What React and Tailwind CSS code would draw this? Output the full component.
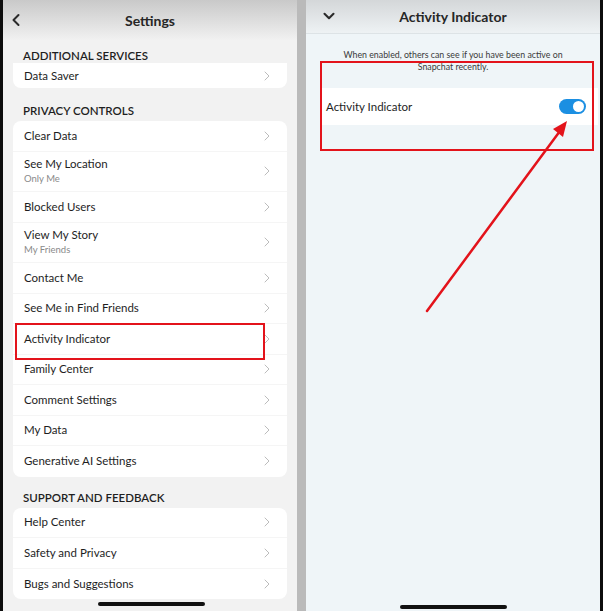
import { ChevronLeft, ChevronRight, ChevronDown } from 'lucide-react';

const FONT = { fontFamily: 'Lato, "Noto Sans", sans-serif' };

const PRIVACY = [
  { label: 'Clear Data' },
  { label: 'See My Location', sub: 'Only Me' },
  { label: 'Blocked Users' },
  { label: 'View My Story', sub: 'My Friends' },
  { label: 'Contact Me' },
  { label: 'See Me in Find Friends' },
  { label: 'Activity Indicator' },
  { label: 'Family Center' },
  { label: 'Comment Settings' },
  { label: 'My Data' },
  { label: 'Generative AI Settings' },
];

const SUPPORT = ['Help Center', 'Safety and Privacy', 'Bugs and Suggestions'];

function Chevron() {
  return <ChevronRight size={16} strokeWidth={1.5} className="text-[#bcbcbc]" />;
}

function Row({ label, sub, last }) {
  return (
    <div className={`flex items-center justify-between pl-[11px] pr-[12px] ${sub ? 'h-[40.5px]' : 'h-[30.5px]'} ${last ? '' : 'border-b border-[#f5f5f5]'}`}>
      <div className="flex flex-col">
        <span className="text-[11.5px] leading-[14px] text-[#1e1e1e]">{label}</span>
        {sub && <span className="text-[9.5px] leading-[12px] text-[#8a8a8a] mt-[2px]">{sub}</span>}
      </div>
      <Chevron />
    </div>
  );
}

function SectionLabel({ children, className }) {
  return (
    <div className={`px-[20px] text-[11.5px] leading-[14px] font-semibold text-[#1f1f1f] ${className}`}>{children}</div>
  );
}

function SettingsPanel() {
  return (
    <div className="w-[294px] h-full bg-[#f2f2f2] flex flex-col">
      <div className="h-[40px] shrink-0 bg-gradient-to-b from-[#c9c9c9] to-[#f1f1f1] relative flex items-center justify-center">
        <ChevronLeft size={20} strokeWidth={2.4} className="absolute left-[3px] top-[10px] text-[#2a2a2a]" />
        <span className="text-[14px] font-bold text-[#262626]">Settings</span>
      </div>
      <SectionLabel className="h-[23px] pt-[9px]">ADDITIONAL SERVICES</SectionLabel>
      <div className="mx-[10px] h-[25px] bg-white rounded-b-lg flex items-center justify-between pl-[11px] pr-[12px]">
        <span className="text-[11.5px] text-[#1e1e1e]">Data Saver</span>
        <Chevron />
      </div>
      <SectionLabel className="h-[33px] pt-[16px]">PRIVACY CONTROLS</SectionLabel>
      <div className="mx-[10px] bg-white rounded-lg">
        {PRIVACY.map((r, i) => (
          <Row key={r.label} {...r} last={i === PRIVACY.length - 1} />
        ))}
      </div>
      <SectionLabel className="h-[31px] pt-[14px]">SUPPORT AND FEEDBACK</SectionLabel>
      <div className="mx-[10px] bg-white rounded-lg">
        {SUPPORT.map((l, i) => (
          <Row key={l} label={l} last={i === SUPPORT.length - 1} />
        ))}
      </div>
      <div className="mt-[3px] ml-[95px] w-[107px] h-[4px] rounded-full bg-[#111]" />
    </div>
  );
}

function ActivityPanel() {
  return (
    <div className="w-[294px] h-full bg-[#eff5f8] flex flex-col">
      <div className="h-[34px] shrink-0 bg-gradient-to-b from-[#d4d7d9] to-[#eef2f4] border-b border-[#dde3e6] relative flex items-center justify-center">
        <ChevronDown size={18} strokeWidth={2.8} className="absolute left-[14px] top-[7px] text-[#2a2a2a]" />
        <span className="text-[14px] font-bold text-[#262626]">Activity Indicator</span>
      </div>
      <p className="mt-[15px] px-[36px] text-center text-[8.8px] leading-[12px] text-[#3a3a3a]">
        When enabled, others can see if you have been active on Snapchat recently.
      </p>
      <div className="mt-[15px] ml-[16px] mr-[2px] h-[37px] bg-white flex items-center justify-between pl-[4px] pr-[12px]">
        <span className="text-[11.5px] text-[#1e1e1e]">Activity Indicator</span>
        <div className="w-[27px] h-[15px] rounded-full bg-[#1b8fe2] flex items-center justify-end pr-[2px]">
          <div className="w-[11px] h-[11px] rounded-full bg-white" />
        </div>
      </div>
      <div className="flex-1" />
      <div className="mb-[2px] ml-[94px] w-[107px] h-[4px] rounded-full bg-[#111]" />
    </div>
  );
}

export default function App() {
  return (
    <div className="relative w-[603px] h-[611px] bg-[#0d0d0d] flex overflow-hidden" style={FONT}>
      <div className="w-[3px] shrink-0" />
      <SettingsPanel />
      <div className="w-[9px] shrink-0 bg-[#bababa]" />
      <ActivityPanel />

      {/* callouts */}
      <div className="absolute left-[15px] top-[323px] w-[250px] h-[37px] border-[2.5px] border-[#e3131b]" />
      <div className="absolute left-[320px] top-[61px] w-[274px] h-[90px] border-[2.5px] border-[#e3131b]" />
      <svg className="absolute left-0 top-0" width="603" height="611" viewBox="0 0 603 611">
        <line x1="427" y1="311" x2="560" y2="131" stroke="#e3131b" strokeWidth="2.5" strokeLinecap="round" />
        <polygon points="567,121 563,137 553,129" fill="#e3131b" />
      </svg>
    </div>
  );
}
